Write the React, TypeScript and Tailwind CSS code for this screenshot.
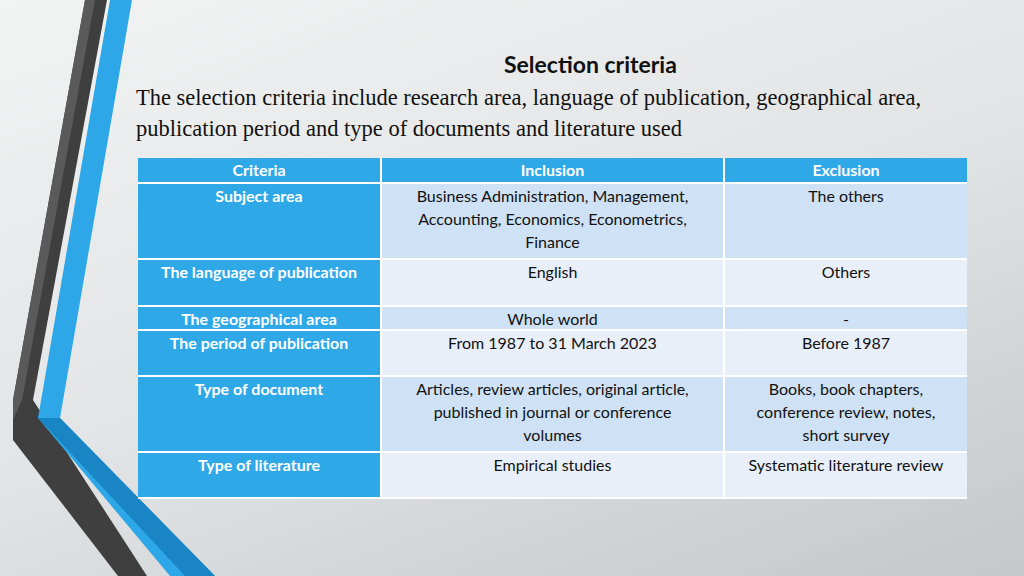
const rows = [
  { c: "Subject area", i: "Business Administration, Management,\nAccounting, Economics, Econometrics,\nFinance", e: "The others", h: "h-[76px]", bg: "bg-[#cfe2f5]" },
  { c: "The language of publication", i: "English", e: "Others", h: "h-[47px]", bg: "bg-[#e8eff9]" },
  { c: "The geographical area", i: "Whole world", e: "-", h: "h-[24px]", bg: "bg-[#cfe2f5]" },
  { c: "The period of publication", i: "From 1987 to 31 March 2023", e: "Before 1987", h: "h-[46px]", bg: "bg-[#e8eff9]" },
  { c: "Type of document", i: "Articles, review articles, original article,\npublished in journal or conference\nvolumes", e: "Books, book chapters,\nconference review, notes,\nshort survey", h: "h-[76px]", bg: "bg-[#cfe2f5]" },
  { c: "Type of literature", i: "Empirical studies", e: "Systematic literature review", h: "h-[46px]", bg: "bg-[#e8eff9]" },
];

export default function App() {
  return (
    <div className="relative w-[1024px] h-[576px] overflow-hidden bg-[linear-gradient(160deg,#f2f3f3_0%,#e2e4e5_50%,#c4c8ca_100%)]">
      <svg className="absolute inset-0" width="1024" height="576">
        <polygon points="85,0 107,0 33,400 147,576 118,576 13,440 13,400" fill="#3f3f3f" />
        <polygon points="85,0 95,0 22,400 13,420 13,400" fill="#5a5a5a" />
        <polygon points="110,0 132,0 60,418 215,576 170,576 38,418" fill="#2ea7e8" />
        <polygon points="38,418 60,418 215,576 185,576" fill="#1a85c4" />
      </svg>
      <div className="relative pl-[136px] pt-[50px] font-[family-name:Liberation_Serif,serif] text-[#111]">
        <div className="pl-[368px] font-[family-name:Lato,sans-serif] font-bold text-[23px] leading-[28px]">Selection criteria</div>
        <p className="text-[22.5px] leading-[31px] mt-[4px] w-[860px]">
          The selection criteria include research area, language of publication, geographical area, publication period and type of documents and literature used
        </p>
      </div>
      <div className="relative ml-[138px] mt-[14px] w-[829px] font-[family-name:Lato,sans-serif] text-[16px] leading-[23px] text-[#111]">
        <div className="flex h-[26px] bg-[#2fa8e8] text-white font-bold border-b-2 border-white">
          <div className="w-[244px] text-center border-r-2 border-white">Criteria</div>
          <div className="w-[343px] text-center border-r-2 border-white">Inclusion</div>
          <div className="flex-1 text-center">Exclusion</div>
        </div>
        {rows.map((r) => (
          <div key={r.c} className={`flex ${r.h} border-b-2 border-white`}>
            <div className="w-[244px] bg-[#2fa8e8] text-white font-bold text-center border-r-2 border-white whitespace-nowrap">{r.c}</div>
            <div className={`w-[343px] ${r.bg} text-center border-r-2 border-white whitespace-pre-line`}>{r.i}</div>
            <div className={`flex-1 ${r.bg} text-center whitespace-pre-line`}>{r.e}</div>
          </div>
        ))}
      </div>
    </div>
  );
}
